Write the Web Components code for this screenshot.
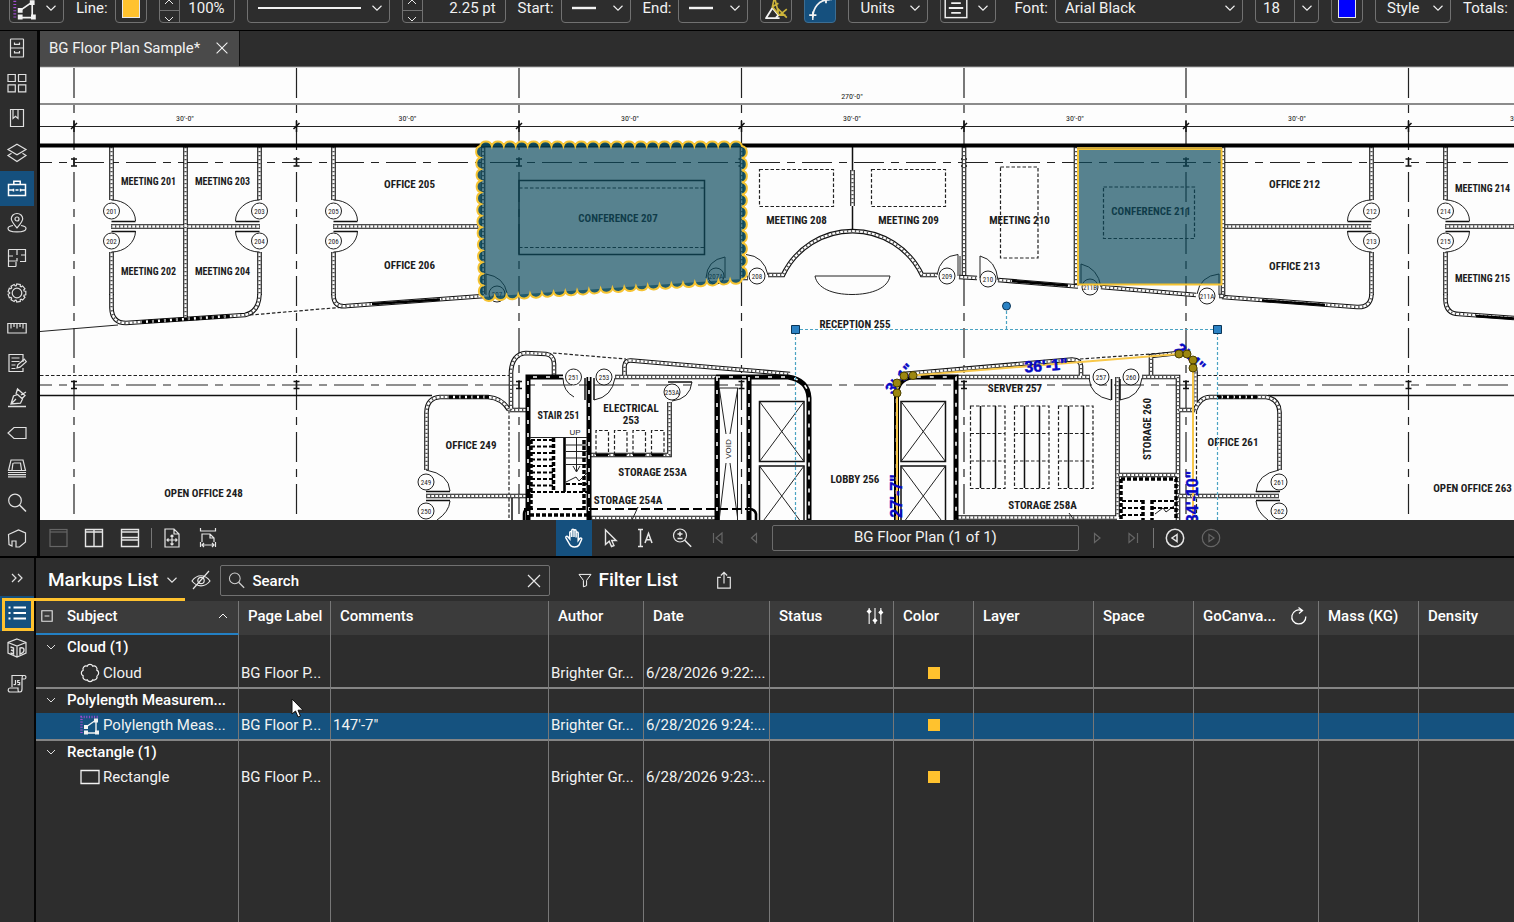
<!DOCTYPE html>
<html lang="en">
<head>
<meta charset="utf-8">
<title>BG Floor Plan Sample</title>
<style>
  html, body { margin: 0; height: 100%; }
  body { background: #2d2d2d; color: #f2f2f2; font: 15px/20px Roboto, "Liberation Sans", sans-serif; overflow: hidden; }
</style>
</head>
<body>
<app-shell>
  <tool-bar slot="toolbar"></tool-bar>
  <nav-rail slot="rail" label="Panels">
    <rail-button icon="files" label="File access"></rail-button>
    <rail-button icon="grid" label="Thumbnails"></rail-button>
    <rail-button icon="bookmark" label="Bookmarks"></rail-button>
    <rail-button icon="layers" label="Layers"></rail-button>
    <rail-button icon="toolbox" label="Tool chest" active></rail-button>
    <rail-button icon="pin" label="Places"></rail-button>
    <rail-button icon="spaces" label="Spaces"></rail-button>
    <rail-button icon="gear" label="Properties"></rail-button>
    <rail-button icon="ruler" label="Measurements"></rail-button>
    <rail-button icon="form" label="Forms"></rail-button>
    <rail-button icon="sign" label="Signatures"></rail-button>
    <rail-button icon="tag" label="Flags"></rail-button>
    <rail-button icon="sets" label="Sets"></rail-button>
    <rail-button icon="search" label="Search"></rail-button>
    <rail-button icon="studio" label="Studio"></rail-button>
  </nav-rail>
  <document-tabs slot="document"></document-tabs>
  <floor-plan slot="document"></floor-plan>
  <view-bar slot="document"></view-bar>
  <nav-rail slot="lower-rail" label="Lists" lower>
    <rail-button icon="expand" label="Expand"></rail-button>
    <rail-button icon="list" label="Markups list" active framed></rail-button>
    <rail-button icon="cube" label="3D model tree"></rail-button>
    <rail-button icon="script" label="JavaScript"></rail-button>
  </nav-rail>
  <markups-panel slot="panel">
    <markups-table></markups-table>
  </markups-panel>
</app-shell>

<script>
const make = (host, html) => { host.attachShadow({ mode: "open" }).innerHTML = html; };

const gearPath = (() => {
  let d = "";
  for (let i = 0; i < 9; i++) {
    const p = (t, r) => (10 + r * Math.cos(t)).toFixed(2) + " " + (10 + r * Math.sin(t)).toFixed(2);
    const a = i * Math.PI * 2 / 9;
    d += (i ? "L" : "M") + p(a - .2, 9) + "L" + p(a + .2, 9) + "L" + p(a + .28, 7.4) + "L" + p(a + .42, 7.4);
  }
  return d + "Z";
})();
const cloudPath = (() => {
  let d = "";
  for (let i = 0; i <= 8; i++) {
    const a = i * Math.PI / 4 + .39;
    const q = (10 + 7.4 * Math.cos(a)).toFixed(2) + " " + (10 + 7.4 * Math.sin(a)).toFixed(2);
    d += i ? "A3.1 3.1 0 0 1 " + q : "M" + q;
  }
  return d;
})();

const ICONS = {
  chevron: '<path d="M5 7.5l5 5 5-5"/>',
  up: '<path d="M5 12.5l5-5 5 5"/>',
  close: '<path d="M4 4l12 12M16 4L4 16"/>',
  line: '<path d="M0 10h20" stroke-width="2"/>',
  polylength: '<path d="M1.5 18V2H18" stroke="#a04bd0" stroke-dasharray="1 1.6" stroke-width="2.4"/><path d="M6 12l10-7v13M6 18h10" stroke-width="1.4"/><path d="M4 10h4v4H4zM14 3.500h4v4h-4zM15 15.500h4v4h-4zM4 15.500h4v4H4z" fill="currentColor" stroke="none"/>',
  highlighter: '<path d="M1 18.500h12M2 18l5-8 5 6-2 2" stroke-width="1.500"/><path d="M9 0l-2 9 6 7h5M12 14L9 2M13 16l6-5M11 10l8 8M7 9l5-3" stroke="#cdb43a" stroke-width="1.400"/>',
  curve: '<path d="M4 18C4 10 9 3 18 3M1 16h6M15 0v6" stroke-width="1.500"/><path d="M4 13v7M12 3h8" />',
  align: '<rect x="1" y="-2" width="18" height="20"/><path d="M4 2h12M6 6h8M4 10h12M6 14h8" stroke-width="1.500"/>',
  files: '<rect x="3.500" y="1" width="13" height="18" rx=".6"/><path d="M3.500 10h13M7.500 4.500v1.800h5V4.500M7.500 13v1.800h5V13"/>',
  grid: '<path d="M1 1.500h7.300v7H1zM11.500 1.500h7.300v7h-7.300zM1 11.800h7.300v7H1zM11.500 11.800h7.300v7h-7.300z"/>',
  bookmark: '<path d="M3.500 1.500h13v17h-13zM6 1.500v9l2.500-2.300L11 10.500v-9"/>',
  layers: '<path d="M10 1.200l9 5.300-9 5.300-9-5.300zM4.500 10.200L1 12.500 10 18.500l9-6-3.500-2.300"/>',
  toolbox: '<path d="M1.500 6.500h17v11h-17zM1.500 12h5M8.500 12h3M13.500 12h5M6.800 6V3.200h6.400V6M6.500 10.800v2.600M13.500 10.800v2.600" stroke-width="1.500"/>',
  pin: '<path d="M10 15C6 10 4.300 8.300 4.300 5.800a5.700 5.300 0 0 1 11.400 0C15.700 8.300 14 10 10 15z"/><circle cx="10" cy="6" r="2"/><path d="M6 12.500c-3 .5-5 1.600-5 2.900 0 2 4 3.400 9 3.400s9-1.400 9-3.400c0-1.300-2-2.400-5-2.900"/>',
  spaces: '<path d="M1.500 1.500h17v12H13M9 18.500H1.500v-17M10 1.500V7M10 10v3M1.500 13h9M18 7h-4M9 14v4.500M1.500 8H6"/>',
  gear: '<path d="' + gearPath + '"/><circle cx="10" cy="10" r="4.800"/>',
  ruler: '<path d="M.8 5.500h18.400v9.500H.8zM4 6v4.500M7 6v3M10 6v4.500M13 6v3M16 6v4.500"/>',
  form: '<path d="M16 9V1.500H2v17h14V15M4.500 5h8M4.500 8.500h8M4.500 12h4M4.500 15.500h4"/><path d="M10 15l.8-3.200 6.500-5.600 2 2.400-6.300 5.600z"/>',
  sign: '<path d="M1 18.500h18M4 16l2.500-8 4-1.500 5 4.500-2 4.200zM4 16l5-5M9 6l1.500-5L18 7.500l-3 3M14 7l5-3" stroke-width="1.300"/>',
  tag: '<path d="M7 4.500h12v11H7L1 10z"/>',
  sets: '<path d="M4 2h12l2.500 10.500h-17zM6.500 5h7l1 7M6 5l-1 7M1 14.500h18M1 16.700h18M1 18.900h18"/>',
  search: '<circle cx="8" cy="7.500" r="6.300"/><path d="M12.500 12l6.500 6.500" stroke-width="1.500"/>',
  studio: '<path d="M1.500 6.500l10-4.500 7 3v9l-6 5H9v-6H5v5l-3-1.500z"/>',
  expand: '<path d="M5 6l4 4-4 4M11 6l4 4-4 4"/>',
  list: '<path d="M6.500 4.500H19M6.500 10H19M6.500 15.500H19" stroke-width="2"/><path d="M1.500 3.500h2v2h-2zM1.500 9h2v2h-2zM1.500 14.500h2v2h-2z" fill="currentColor" stroke="none"/>',
  cube: '<path d="M10 1l9 3.500v10.500l-9 4-9-4V4.500zM1 4.500l9 3.500 9-3.500M10 8v11"/><path d="M3.500 9l3 1v6l-3-1M4 12l2.500 1M13 10v6c3-1 4-2 4-4s-1-2.600-4-2z" stroke-width="1.400"/>',
  script: '<path d="M5 14V2.500h12.500c2 0 1.800 3.500 0 3.500H15v10c0 3-2 3-2 3H3c-2.500 0-2.300-4 0-4h8c0 2-.3 4 2 4M16 2.500C15 3 15 4 15 6"/><path d="M8.500 7v4c0 1-1.500 1-1.500 0M12.700 7.500h-2v2h2v2.200h-2.200"/>',
  pane: '<rect x="2" y="1.500" width="17" height="17"/><path d="M2 4h17"/>',
  panesV: '<path d="M1.500 1.500h17v17h-17zM1.500 4h17M10 2v16" stroke-width="1.400"/>',
  panesH: '<path d="M1.500 1.500h17v17h-17zM1.500 4h17M1.500 9.500h17M1.500 12h17" stroke-width="1.400"/>',
  fitPage: '<path d="M12 1H3v18h14V6zM12 1v5h5M10 7v10M5 12h10M8.500 8.500L10 7l1.500 1.500M8.500 15.500L10 17l1.500-1.500M6.500 10.500L5 12l1.500 1.500M13.500 10.500L15 12l-1.500 1.500"/>',
  fitWidth: '<path d="M2.500 0v3h15V0M4 14V6h8l4 4v4M12 6v4h4M2.500 14v5M17.500 14v5M4 17h12M6 15l-2 2 2 2M14 15l2 2-2 2"/>',
  hand: '<path d="M6.200 11V4.500c0-1.500 2-1.500 2 0V9 2.500c0-1.600 2.200-1.600 2.200 0V9 3c0-1.600 2.100-1.500 2.100 0v6.500V5c0-1.500 2.100-1.500 2.100 0v7.500l1.500-2c1-1.200 2.500-.2 1.900 1L15.500 17c-1 1.500-2.500 2-4.500 2-3 0-4.500-1.200-5.500-3.500L2.300 9.800c-.6-1.400 1.200-2.200 2-1z" transform="translate(-.4 0)" stroke-width="1.500"/>',
  pointer: '<path d="M5.500 2v14.500l3.700-3.300 2.300 5.300 2.500-1-2.300-5h4.500z" stroke-width="1.400"/>',
  textSel: '<path d="M2 1.500h5M4.500 1.500v17M2 18.500h5M9 15l3.500-9.500L16 15M10.200 11.800h4.600" stroke-width="1.500"/>',
  zoomIn: '<circle cx="8" cy="7.500" r="6.500"/><path d="M12.700 12.300l6.500 6.500M5.500 6h5M8 3.700v4.600M5.500 10.500h5" stroke-width="1.500"/>',
  first: '<path d="M5.500 5v10M14 5l-6 5 6 5z"/>',
  prev: '<path d="M12.500 5.500l-5 4.500 5 4.500z"/>',
  next: '<path d="M7.500 5.500l5.500 4.500-5.500 4.500z"/>',
  last: '<path d="M6 5.500l5.500 4.500L6 14.500zM14.500 5v10"/>',
  back: '<circle cx="10" cy="10" r="8.700" stroke-width="1.500"/><path d="M12 6.500L7 10l5 3.500z" stroke-width="1.500"/>',
  forward: '<circle cx="10" cy="10" r="8.700"/><path d="M8 6.500l5 3.500-5 3.500z"/>',
  hidden: '<path d="M1 11c5-7 13-7 18 0-5 6.500-13 6.500-18 0zM18 1L2 19"/><circle cx="10" cy="10.500" r="3.200"/>',
  funnel: '<path d="M2.500 3h15l-5.500 7.500V17l-4 1.500v-8z"/>',
  share: '<path d="M6.500 7H3v12h14V7h-3.500M10 14V1.500M6.500 5L10 1.500 13.500 5" stroke-width="1.300"/>',
  collapse: '<path d="M3.500 3.500h13v13h-13zM7 10h6" stroke-width="1.400"/>',
  sliders: '<path d="M3.500 1v18M10 1v18M16.500 1v18"/><path d="M1.500 5l2-2 2 2-2 2zM8 15l2-2 2 2-2 2zM14.500 6l2-2 2 2-2 2z" fill="currentColor"/>',
  refresh: '<path d="M12.500 4.500a7 7 0 1 0 4.300 6M9.500 1.500l4 3-3.500 3" stroke-width="1.300"/>',
  cloud: '<path d="' + cloudPath + '"/>',
  rect: '<path d="M1 3.500h18v13H1z" stroke-width="1.300"/>'
};

customElements.define("ui-icon", class extends HTMLElement {
  constructor() {
    super();
    const size = this.getAttribute("size") || 20;
    make(this, `<style>:host{display:inline-flex;flex:none}svg{display:block;fill:none;stroke:currentColor;stroke-width:1.2;overflow:visible}</style>
      <svg width="${size}" height="${size}" viewBox="0 0 20 20" aria-hidden="true">${ICONS[this.getAttribute("name")]}</svg>`);
  }
});

customElements.define("app-shell", class extends HTMLElement {
  constructor() {
    super();
    make(this, `<style>
      :host{display:flex;flex-direction:column;height:100vh}
      .work{display:flex;border-bottom:2px solid #000}
      .doc{flex:1;min-width:0;display:flex;flex-direction:column}
      .lower{flex:1;min-height:0;display:flex}
      .panel{flex:1;min-width:0;display:flex}
    </style>
    <slot name="toolbar"></slot>
    <div class="work"><slot name="rail"></slot><main class="doc"><slot name="document"></slot></main></div>
    <div class="lower"><slot name="lower-rail"></slot><section class="panel"><slot name="panel"></slot></section></div>`);
  }
});

/* Drop-down: text values use a select, pictured values a pop-up button. */
customElements.define("ui-select", class extends HTMLElement {
  constructor() {
    super();
    const value = this.getAttribute("value"), icon = this.getAttribute("icon"), label = this.getAttribute("label");
    const control = value
      ? `<select aria-label="${label}"><option>${value}</option></select>`
      : `<button type="button" aria-haspopup="listbox" aria-label="${label}">${icon ? `<ui-icon name="${icon}" size="${this.getAttribute("icon-size") || 24}"></ui-icon>` : "<i></i>"}</button>`;
    make(this, `<style>
      :host{display:grid;grid-template-columns:1fr 24px;align-items:center;box-sizing:border-box;height:30px;border:1px solid #717171;border-radius:4px;flex:none}
      select,button{grid-area:1/1/2/3;height:28px;width:100%;margin:0;padding:0 24px 0 var(--pad,11px);border:0;background:none;color:#f2f2f2;font:inherit;appearance:none;text-align:left;display:flex;align-items:center}
      button{padding-left:var(--pad,10px)}
      i{flex:1;height:2px;background:#f2f2f2;margin-right:4px}
      .chev{grid-area:1/2;pointer-events:none;display:flex;align-items:center;justify-content:center;height:28px;color:#f2f2f2}
      :host([split]) .chev{border-left:1px solid #717171}
    </style>${control}<span class="chev"><ui-icon name="chevron" size="18"></ui-icon></span>`);
  }
});

customElements.define("ui-spinner", class extends HTMLElement {
  constructor() {
    super();
    make(this, `<style>
      :host{display:flex;box-sizing:border-box;height:30px;border:1px solid #717171;border-radius:4px;flex:none}
      .steps{flex:none;width:19px;border-right:1px solid #717171;display:flex;flex-direction:column}
      button{flex:1;padding:0;border:0;background:none;color:#f2f2f2;display:flex;align-items:center;justify-content:center}
      button + button{border-top:1px solid #717171}
      input{flex:1;min-width:0;border:0;background:none;color:#f2f2f2;font:inherit;text-align:right;padding:0 9px 0 0}
    </style><span class="steps"><button type="button" aria-label="Increase"><ui-icon name="up" size="16"></ui-icon></button><button type="button" aria-label="Decrease"><ui-icon name="chevron" size="16"></ui-icon></button></span>
    <input type="text" aria-label="${this.getAttribute("label")}" value="${this.getAttribute("value")}">`);
  }
});

customElements.define("tool-bar", class extends HTMLElement {
  constructor() {
    super();
    make(this, `<style>
      :host{display:flex;align-items:flex-end;gap:12px;box-sizing:border-box;height:31px;padding-left:9px;border-bottom:1px solid #000;overflow:hidden;white-space:nowrap;flex:none}
      :host > *{flex:none;margin-bottom:7px}
      .pair{display:flex;align-items:center;gap:7px;height:30px}
      button{box-sizing:border-box;width:32px;height:30px;padding:0;border:1px solid #717171;border-radius:4px;background:none;color:#f2f2f2;display:flex;align-items:center;justify-content:center}
      .swatch::before{content:"";width:16px;height:18px;background:var(--c);border:1px solid #e8e8e8}
      .on{background:#15507e;border-color:#3c6d92}
      .font{margin-left:6px}
      .w54{width:55px;--pad:3px}.w76{width:76px}.w142{width:143px}.w103{width:104px}.w69{width:70px}.w79{width:80px}.w56{width:56px;--pad:3px}.w188{width:188px;--pad:9px}.w64{width:64px;--pad:7px}
    </style>
    <ui-select class="w54" icon="polylength" label="Tool"></ui-select>
    <span class="pair"><span>Line:</span><button type="button" class="swatch" style="--c:#ffc22e" aria-label="Line color"></button></span>
    <ui-spinner class="w76" label="Opacity" value="100%"></ui-spinner>
    <ui-select class="w142" label="Line style"></ui-select>
    <ui-spinner class="w103" label="Line width" value="2.25 pt"></ui-spinner>
    <span class="pair"><span>Start:</span><ui-select class="w69" icon="line" label="Line start"></ui-select></span>
    <span class="pair"><span>End:</span><ui-select class="w69" icon="line" label="Line end"></ui-select></span>
    <button type="button" aria-label="Highlight"><ui-icon name="highlighter" size="24"></ui-icon></button>
    <button type="button" class="on" aria-label="Curve"><ui-icon name="curve" size="24"></ui-icon></button>
    <ui-select class="w79" value="Units" label="Units"></ui-select>
    <ui-select class="w56" icon="align" label="Alignment"></ui-select>
    <span class="pair font"><span>Font:</span><ui-select class="w188" value="Arial Black" label="Font"></ui-select></span>
    <ui-select class="w64" value="18" label="Font size" split></ui-select>
    <button type="button" class="swatch" style="--c:#0000ff" aria-label="Font color"></button>
    <ui-select class="w76" value="Style" label="Style"></ui-select>
    <span class="pair">Totals:</span>`);
  }
});

customElements.define("nav-rail", class extends HTMLElement {
  constructor() {
    super();
    make(this, `<style>
      :host{display:block;flex:none;width:37px;border-right:3px solid #050505}
      :host([lower]){width:34px;border-right-width:2px;padding-top:3px}
      nav{display:flex;flex-direction:column}
    </style><nav aria-label="${this.getAttribute("label")}"><slot></slot></nav>`);
  }
});

customElements.define("rail-button", class extends HTMLElement {
  constructor() {
    super();
    make(this, `<style>
      :host{display:block;height:35px;width:34px}
      button{box-sizing:border-box;width:100%;height:100%;padding:0 0 1px;border:0;background:none;color:#e0e0e0;display:flex;align-items:center;justify-content:center}
      :host([active]) button{background:#15507e;color:#fff}
      :host([framed]){position:relative}
      :host([framed])::after{content:"";position:absolute;inset:2px 0 0 2px;border:3px solid #ffc22e}
    </style><button type="button" aria-label="${this.getAttribute("label")}"><ui-icon name="${this.getAttribute("icon")}"></ui-icon></button>`);
  }
});

customElements.define("document-tabs", class extends HTMLElement {
  constructor() {
    super();
    make(this, `<style>
      :host{display:flex;height:35px;flex:none}
      .tab{display:flex;align-items:center;gap:12px;padding:0 7px 1px 9px;background:#4a4a4a;border-right:1px solid #111}
      button{padding:0;border:0;background:none;color:#f2f2f2;display:flex;font:inherit;line-height:20px}
      button.close{width:20px;justify-content:center}
    </style><div class="tab"><button type="button">BG Floor Plan Sample*</button><button type="button" class="close" aria-label="Close tab"><ui-icon name="close" size="18"></ui-icon></button></div>`);
  }
});

customElements.define("view-bar", class extends HTMLElement {
  constructor() {
    super();
    const b = (icon, label, cls = "") => `<button type="button" class="${cls}" aria-label="${label}" ${cls === "off" ? "disabled" : ""}><ui-icon name="${icon}"></ui-icon></button>`;
    make(this, `<style>
      :host{display:flex;height:36px;flex:none}
      div{display:flex;align-items:center}
      .left{flex:0 0 35%;box-sizing:border-box}
      button{width:36px;height:36px;padding:0;border:0;background:none;color:#e6e6e6;display:flex;align-items:center;justify-content:center;flex:none}
      .on{background:#15507e;color:#fff}.off{color:#666}
      .sep{width:6px;height:20px;display:flex;justify-content:center;flex:none}
      .sep::before{content:"";width:1px;background:#777}
      input{box-sizing:border-box;width:307px;height:26px;margin:0;border:1px solid #6b6b6b;border-radius:2px;background:none;color:#f2f2f2;font:inherit;text-align:center;padding:0 4px 2px}
    </style>
    <div class="left">${b("pane", "Single view", "off")}${b("panesV", "Split vertical")}${b("panesH", "Split horizontal")}<span class="sep"></span>${b("fitPage", "Fit page")}${b("fitWidth", "Fit width")}</div>
    <div>${b("hand", "Pan", "on")}${b("pointer", "Select")}${b("textSel", "Select text")}${b("zoomIn", "Zoom")}${b("first", "First page", "off")}${b("prev", "Previous page", "off")}<input type="text" aria-label="Page" value="BG Floor Plan (1 of 1)">${b("next", "Next page", "off")}${b("last", "Last page", "off")}<span class="sep"></span>${b("back", "Previous view")}${b("forward", "Next view", "off")}</div>`);
  }
});

customElements.define("floor-plan", class extends HTMLElement {
  constructor() {
    super();
    const p = (d, cls = "ln") => `<path class="${cls}" d="${d}"/>`;
    const wall = d => p(d, "w1") + p(d, "w2") + p(d, "w3");
    const dark = d => p(d, "k1") + p(d, "k2");
    const blackDash = d => p(d, "k3");
    const label = (x, y, s, r) => `<text ${/MEETING 20[1-4]|21[45]|STAIR/.test(s) ? 'class="tight"' : ""} x="${x}" y="${y}" ${r ? `transform="rotate(${r} ${x} ${y})"` : ""}>${s}</text>`;
    const mark = (x, y, s) => `<circle class="ln" cx="${x}" cy="${y}" r="8"/><text class="mk" x="${x}" y="${y + 3}">${s}</text>`;
    const cols = [74, 296.5, 519, 741.5, 964, 1186, 1408.5];
    let g = "";
    g += p("M40 66.500H1514M40 104H1514", "gr") + p("M40 126.500H1514");
    cols.forEach(x => {
      g += p(`M${x} 16V520`, "ax") + p(`M${x - 3} 129l6-6M${x} 121v11`, "md");
      [162.5, 385].forEach(y => { g += p(`M${x - 3} ${y - 3.5}h6M${x} ${y - 3.5}v7M${x - 3} ${y + 3.5}h6`, "md"); });
    });
    g += p("M22 162.500H1514M22 385H1514", "ax");
    g += '<text class="dm" x="852" y="99">270\'-0"</text>';
    [185, 407.5, 630, 852, 1075, 1297, 1519].forEach(x => { g += `<text class="dm" x="${x}" y="121">30'-0"</text>`; });

    /* offices along the north wall */
    const pair = (x, s, a, b) => wall(`M${x} 147V200M${x} 252V295`) +
      p(`M${x} 200A24 21 0 0 ${s > 0 ? 1 : 0} ${x + 24 * s} 221M${x} 252A24 21 0 0 ${s > 0 ? 0 : 1} ${x + 24 * s} 231`) +
      p(`M${x} 221.500h${24 * s}M${x} 231.500h${24 * s}`, "md") + mark(x, 211, a) + mark(x, 241, b);
    g += wall("M111.500 294V308Q112 323 126 323L245 315Q259 312 259.500 294M185.500 147V318M111 226.500H260");
    g += blackDash("M142 322L232 316");
    g += pair(111.5, 1, 201, 202) + pair(259.5, -1, 203, 204);
    g += p("M40 331.500L118 325") + p("M250 315L345 307", "ds");
    g += wall("M333.500 294Q333 308 347 306L484 296M333 226.500H481") + pair(333.5, 1, 205, 206) + p("M372 304L440 299.500", "k0");
    g += wall("M1371.500 294Q1371 308 1357 307L1222 297M1223 226.500H1371") + pair(1371.5, -1, 212, 213) + p("M1262 300.500L1325 305", "k0");
    g += wall("M1445.500 294V300Q1446 314 1459 314L1514 318M1445 226.500H1514") + pair(1445.5, 1, 214, 215) + p("M1476 316L1514 318.500", "k0");
    g += wall("M483 147V294M742 147V279M964 147V277M1076 147V286M1223 147V297M743 278H748M852.500 170V206");
    g += p("M852.500 147V170M852.500 206V232", "md");
    g += wall("M768 275H783A77 77 0 0 1 922 275H937M959 277L977 278M998 280L1078 286.500M1101 287L1196 295M1219 296H1224");
    g += p("M1012 281L1068 285.500", "k0");
    g += p("M815 276H890C888 288 872 294.500 852 294.500S817 288 815 276Z");
    g += p("M759.500 169.500H833.500V206.500H759.500ZM871.500 169.500H945.500V206.500H871.500ZM1000.500 167H1038V258H1000.500Z", "ds");
    g += p("M746 254.500Q764 256 768 275M937 275Q940 256 958 254.500V276M960 256V276M980 278V256Q996 260 998 280M486 295V274Q504 277 507 293M725 278V257Q707 260 706 278M1081 285V264Q1098 268 1101 287M1219 295V274Q1200 276 1197 294");
    g += mark(757, 276, 208) + mark(947, 276, 209) + mark(988, 279, 210) + mark(1090, 287, "211B") + mark(1207, 296, "211A") + mark(497, 294, 207) + mark(716, 276, "207A");
    g += p("M519 180.500H704.500V254.500H519Z", "md") + p("M519 188H704M519 247.500H704M1103.500 187H1194.500V238.500H1103.500Z", "ds");

    /* core, west half */
    g += p("M40 375.500H510M1197 375.500H1514M509 410V520M1196.500 372V520M553 353L626 359M1080 359L1172 352.500", "ds");
    g += p("M40 395.500H432M1268 395.500H1514M512 498V520", "md");
    g += wall("M426.500 470V412Q427 398 440 397H488Q502 398 509 410M511 410V372Q512 354 526 353L546 354Q554 355 554 364V376M510 410H527M426 496H527");
    g += blackDash("M449 397H490");
    g += wall("M615 377H716M624.500 376V366Q625 360 631 360.500L790 374M669.500 402V455H591M591 518H715");
    g += dark("M563 377H528V520M589 377V520M717 377V520M749 377V520M716 377H788Q808 380 809 398V520");
    g += p("M426 470Q449 474 450 491M450 501Q449 512 437 520M563 378Q563 391 574 397M615 378Q612 397 594 400M692 382Q690 399 672 401");
    g += p("M426 491.500h24M426 500.500h24M585 378V400M594 378V400M668 382H692", "md");
    g += mark(426, 482, 249) + mark(426, 511, 250) + mark(573.5, 377, 251) + mark(604, 377, 253) + mark(672, 392, "253A");
    g += p("M719.500 388V520M737.500 388V520M719 388H738M719.500 390L726 434M737.500 390L730 434M726 463L719.500 517M730 463L737.500 517M530 437.500H587M566 445H587M566 451.500H587M566 458H587M566 464.500H587M576.500 438V471M573 466L576.500 472 580 466M566 482L576 477 579 481 587 473");
    [596, 614.5, 633, 651.5].forEach(x => { g += p(`M${x} 455V430.500H${x + 12.5}V455`, "ds") + p(`M${x} 455h12`, "k0"); });
    g += p("M531 440H553M531 446.500H553M531 453H553M531 459.500H553M531 466H553M531 472.500H553M531 479H553M531 485.500H553M531 492H587M566 484H587", "dd") + p("M553.500 438V492M584 440V512M531 440V512", "k3") + p("M564.500 438V492", "k0");
    g += p("M524 509H750", "bd") + blackDash("M530 515H588") + p("M524 520V514Q524 509 530 509M756 520V514Q755 509 749 509", "k0") + p("M638 507L632 520");
    const lift = (x, w) => { [401.5, 466].forEach(y => { g += p(`M${x} ${y}h${w}v60h${-w}z`, "md") + p(`M${x} ${y}l${w} 60M${x + w} ${y}l${-w} 60`); }); };
    lift(759.5, 44.5); lift(901, 44.5);

    /* core, east half */
    g += wall("M903 374L1072 359.500Q1081 360 1081 366V376M957 377H1090M1151 376V356L1178 353Q1194 354 1195.500 372V404M1142 377H1178V520M1117.500 377V517M1178 410H1195M1118 475H1178M957 517.500H1117M1178 496H1279M1195 410Q1200 397 1210 397H1266Q1279 399 1279.500 412V470");
    g += dark("M896.500 520V395Q897 379 912 377H956V520");
    g += blackDash("M1217 397H1258M1121 479H1176V520M1121 479V520");
    g += p("M1089 378Q1090 396 1111 400M1142 378Q1140 397 1120 400M1279 470Q1257 474 1256 492M1256 501Q1257 512 1268 520M1155 514L1163 508 1166 512 1174 506M1069 513L1074 520");
    g += p("M1111.500 379V400M1120 379V400M1256 491.500h24M1256 500.500h24", "md");
    g += p("M1122 501H1142M1122 508H1142M1122 515H1142M1152 501H1175M1152 508H1175", "dd") + blackDash("M1143 500V520M1152 500V520");
    g += mark(1101, 377, 257) + mark(1131, 377, 260) + mark(1279, 482, 261) + mark(1279, 511, 262);
    [970.5, 1014.5, 1058.5].forEach(x => { g += p(`M${x} 406H${x + 34.5}V488.500H${x}ZM${x} 433.500h34M${x} 461h34`, "ds") + p(`M${x + 10} 406V488M${x + 25} 406V488`, "md"); });

    /* room names */
    [[148.5, 185, "MEETING 201"], [222.5, 185, "MEETING 203"], [148.5, 275, "MEETING 202"], [222.5, 275, "MEETING 204"],
     [409.5, 188, "OFFICE 205"], [409.5, 269, "OFFICE 206"], [618, 222, "CONFERENCE 207"], [796.5, 224, "MEETING 208"],
     [908.5, 224, "MEETING 209"], [1019.5, 224, "MEETING 210"], [1151, 215, "CONFERENCE 211"], [1294.5, 188, "OFFICE 212"],
     [1294.5, 270, "OFFICE 213"], [1482.5, 192, "MEETING 214"], [1482.5, 282, "MEETING 215"], [855, 328, "RECEPTION 255"],
     [203.5, 497, "OPEN OFFICE 248"], [471, 449, "OFFICE 249"], [558.5, 419, "STAIR 251"], [631, 412, "ELECTRICAL"], [631, 424, "253"],
     [652.5, 476, "STORAGE 253A"], [628, 504, "STORAGE 254A"], [855, 483, "LOBBY 256"], [1015, 392, "SERVER 257"],
     [1042.5, 509, "STORAGE 258A"], [1151, 429, "STORAGE 260", -90], [1233, 446, "OFFICE 261"], [1472.5, 492, "OPEN OFFICE 263"]
    ].forEach(t => { g += label(...t); });
    g += '<text class="sm" x="575" y="435">UP</text><text class="sm" transform="rotate(-90 731 449)" x="731" y="449">VOID</text>';
    g += p("M40 145.500H1514", "top");

    /* cloud markup: scallops walk the outline clockwise */
    const corners = [[480, 146], [742, 146], [742, 279], [483, 297]];
    let cloud = `M${corners[0]}`;
    corners.forEach((a, i) => {
      const b = corners[(i + 1) % 4], n = Math.round(Math.hypot(b[0] - a[0], b[1] - a[1]) / 11.8);
      for (let k = 1; k <= n; k++) cloud += `A6.200 6.200 0 0 1 ${(a[0] + (b[0] - a[0]) * k / n).toFixed(1)} ${(a[1] + (b[1] - a[1]) * k / n).toFixed(1)}`;
    });
    g += `<path d="${cloud}Z" fill="#0c4a5d" fill-opacity=".69"/><path d="${cloud}ZM480 146L483 297 742 279V146Z" fill="#0c4a5d" fill-opacity=".7"/><path d="${cloud}Z" fill="none" stroke="#f6c433" stroke-width="2"/>`;
    g += '<path d="M1078 149H1221.500V284.500H1078Z" fill="#0c4a5d" fill-opacity=".69" stroke="#f6c433" stroke-width="2"/><path d="M1077 148H1222" stroke="#cda83e" stroke-width="2"/>';

    /* polylength markup with its selection frame */
    g += p("M795.500 520V329.500H1217.500V520M1006.500 306V329.500", "sel");
    g += '<path d="M897 520V383L904 376 913 375.500 1179 354H1187L1193 360V520" fill="none" stroke="#f8c84a" stroke-width="2"/>';
    const dim = (x, y, r, s) => `<text class="bl" transform="translate(${x} ${y}) rotate(${r})" y="5">${s}</text>`;
    g += dim(1046, 366, -4, "36'-1\"") + dim(897, 496, -90, "27'-7\"") + dim(1193, 497, -90, "34'-10\"") + dim(900, 379, -48, "3'-1\"") + dim(1190, 358, 42, "2'-4\"");
    [[897, 393], [897, 383], [904, 376], [913, 375.5], [1179, 354], [1187, 354], [1193, 360], [1193, 368]].forEach(c => {
      g += `<circle cx="${c[0]}" cy="${c[1]}" r="4" fill="#9c8710" stroke="#4d4200"/>`;
    });
    g += '<path d="M791.500 325.500h8v8h-8zM1213.500 325.500h8v8h-8zM1010.500 306a4 4 0 1 1-8 0a4 4 0 1 1 8 0z" fill="#2b82c4" stroke="#0b3557"/>';

    make(this, `<style>
      :host{display:flex;flex:1;min-height:0;contain:size;background:#fdfdfd;overflow:hidden}
      svg{flex:1;min-width:0;display:block}
      path:not([fill]){fill:none}
      .ln{stroke:#222;stroke-width:1}.gr{stroke:#666;stroke-width:1.4}.md{stroke:#111;stroke-width:1.5}
      .top{stroke:#000;stroke-width:4}.ax{stroke:#222;stroke-width:1.2;stroke-dasharray:30 7 8 7}
      .ds{stroke:#222;stroke-width:1.2;stroke-dasharray:3.500 2}.dd{stroke:#000;stroke-width:2;stroke-dasharray:4 2}
      .bd{stroke:#000;stroke-width:2;stroke-dasharray:9 4}
      .w1{stroke:#111;stroke-width:4.600}.w2{stroke:#fff;stroke-width:2.400}.w3{stroke:#555;stroke-width:2.400;stroke-dasharray:1.300 2.700}
      .k0{stroke:#000;stroke-width:2.600}.k1{stroke:#000;stroke-width:5}.k2{stroke:#fff;stroke-width:1.600;stroke-dasharray:4 9}.k3{stroke:#000;stroke-width:3.500;stroke-dasharray:4 2}
      .sel{stroke:#4ba3c3;stroke-width:1.200;stroke-dasharray:3 2}
      circle.ln{fill:#fdfdfd}
      text{font:bold 11px "Liberation Sans Narrow","Roboto Condensed",Roboto,sans-serif;fill:#1c1c1c;text-anchor:middle}
      .tight{font-size:10px}
      .mk{font:7px "Liberation Sans Narrow","Roboto Condensed",Roboto,sans-serif}.dm{font:8px "Liberation Sans Narrow","Roboto Condensed",Roboto,sans-serif}
      .sm{font:8px "Liberation Sans",sans-serif}
      .bl{font:bold 16px "Liberation Sans",sans-serif;fill:#0808c4;stroke:#0808c4;stroke-width:.4}
    </style><svg viewBox="40 66 1474 454" preserveAspectRatio="xMinYMin slice" role="img" aria-label="Floor plan">${g}</svg>`);
  }
});

customElements.define("markups-panel", class extends HTMLElement {
  constructor() {
    super();
    make(this, `<style>
      :host{flex:1;min-width:0;display:flex;flex-direction:column;position:relative}
      header{position:relative;display:flex;align-items:center;height:43px;flex:none;padding:0 0 0 12px}
      header::after{content:"";position:absolute;left:-2px;bottom:0;width:151px;height:3px;background:#ffc22e}
      h2{margin:0;font-size:19px;line-height:24px;font-weight:500;color:#fff}
      button{padding:0;border:0;background:none;color:#e6e6e6;display:flex;align-items:center;flex:none}
      .menu{width:28px;justify-content:center}.eye{width:30px;justify-content:center}
      label{box-sizing:border-box;display:flex;align-items:center;width:330px;height:31px;margin:2px 0 0 4px;padding:0 5px 0 7px;border:1px solid #717171;border-radius:2px;color:#d0d0d0;gap:7px}
      input{flex:1;min-width:0;border:0;background:none;padding:0;font:500 15px/20px Roboto,sans-serif;color:#fff}
      input::placeholder{color:#fff;opacity:1}
      .filter{margin-left:27px;gap:5px;font:500 19px/24px Roboto,sans-serif;color:#fff}
      .share{margin-left:37px}
      .cursor{position:absolute;left:255px;top:140px;width:13px;height:20px}
      .body{flex:1;min-height:0;display:flex}
    </style>
    <header><h2>Markups List</h2><button type="button" class="menu" aria-label="List options"><ui-icon name="chevron" size="18"></ui-icon></button>
      <button type="button" class="eye" aria-label="Hide markups"><ui-icon name="hidden"></ui-icon></button>
      <label><ui-icon name="search" size="17"></ui-icon><input type="text" placeholder="Search" aria-label="Search"><button type="button" aria-label="Clear search"><ui-icon name="close" size="20"></ui-icon></button></label>
      <button type="button" class="filter"><ui-icon name="funnel" size="16"></ui-icon>Filter List</button>
      <button type="button" class="share" aria-label="Export"><ui-icon name="share" size="18"></ui-icon></button></header>
    <div class="body"><slot></slot></div>
    <svg class="cursor" viewBox="0 0 13 20" aria-hidden="true"><path d="M1 1v15l3.500-3 2.500 6 2.500-1-2.500-5.800H12z" fill="#fff" stroke="#111"/></svg>`);
  }
});

customElements.define("markups-table", class extends HTMLElement {
  constructor() {
    super();
    const widths = [203, 92, 218, 95, 126, 124, 80, 120, 100, 125, 100];
    const heads = ["Subject", "Page Label", "Comments", "Author", "Date", "Status", "Color", "Layer", "Space", "GoCanva...", "Mass (KG)", "Density"];
    const extra = { Subject: '<ui-icon name="up" size="16"></ui-icon>', Status: '<ui-icon name="sliders" size="18"></ui-icon>', "GoCanva...": '<ui-icon name="refresh"></ui-icon>' };
    const empty = n => "<td></td>".repeat(n);
    const rows = [
      { group: "Cloud (1)", icon: "cloud", name: "Cloud", comment: "", date: "6/28/2026 9:22:..." },
      { group: "Polylength Measurem...", icon: "polylength", name: "Polylength Meas...", comment: "147'-7\"", date: "6/28/2026 9:24:...", on: true },
      { group: "Rectangle (1)", icon: "rect", name: "Rectangle", comment: "", date: "6/28/2026 9:23:..." }
    ];
    make(this, `<style>
      :host{display:flex;flex-direction:column;flex:1;min-width:0;overflow:hidden}
      table{width:100%;table-layout:fixed;border-collapse:separate;border-spacing:0;flex:none}
      th,td{box-sizing:border-box;padding:0 0 2px 2px;border-right:1px solid #777;text-align:left;white-space:nowrap;overflow:hidden;font-weight:400;vertical-align:middle}
      th:last-child,td:last-child{border-right:0}
      div{display:flex;align-items:center}
      thead th{height:34px;background:#3b3b3b;padding:0 9px 4px;font-weight:500;color:#fff}
      thead th:first-child{padding:0 7px 2px 3px;border-bottom:2px solid #2380c4}
      thead div span{flex:1}
      .fold{padding:0;border:0;background:none;color:#e6e6e6;display:flex;width:28px;flex:none}
      tbody tr{height:26px}
      .group{color:#fff}
      .group th{font-weight:500;padding-left:7px}
      .group .fold{width:24px}
      tbody + tbody .group > *{border-top:2px solid #858585;padding-bottom:3px}
      .item th{padding-left:44px}
      .item th div{gap:3px}
      .on{background:#15527f}
      .pad0{padding-left:0}
      .swatch{display:block;width:12px;height:12px;margin:0 auto;background:#ffc22e}
      .rest{flex:1;display:grid;align-items:stretch;grid-template-columns:${widths.map(w => w + "px").join(" ")} 1fr}
      .rest i{border-right:1px solid #777}
    </style>
    <table><colgroup>${widths.map(w => `<col style="width:${w}px">`).join("")}<col></colgroup>
    <thead><tr>${heads.map((h, i) => `<th scope="col"><div>${i ? "" : '<button type="button" class="fold" aria-label="Collapse all"><ui-icon name="collapse" size="16"></ui-icon></button>'}<span>${h}</span>${extra[h] || ""}</div></th>`).join("")}</tr></thead>
    ${rows.map(r => `<tbody><tr class="group"><th scope="rowgroup"><div><button type="button" class="fold" aria-label="Collapse group"><ui-icon name="chevron" size="16"></ui-icon></button>${r.group}</div></th>${empty(11)}</tr>
      <tr class="item${r.on ? " on" : ""}"><th scope="row"><div><ui-icon name="${r.icon}"></ui-icon>${r.name}</div></th><td>BG Floor P...</td><td>${r.comment}</td><td>Brighter Gr...</td><td>${r.date}</td><td></td><td class="pad0"><span class="swatch"></span></td>${empty(5)}</tr></tbody>`).join("")}
    </table><div class="rest" aria-hidden="true">${widths.map(() => "<i></i>").join("")}</div>`);
  }
});
</script>
</body>
</html>
